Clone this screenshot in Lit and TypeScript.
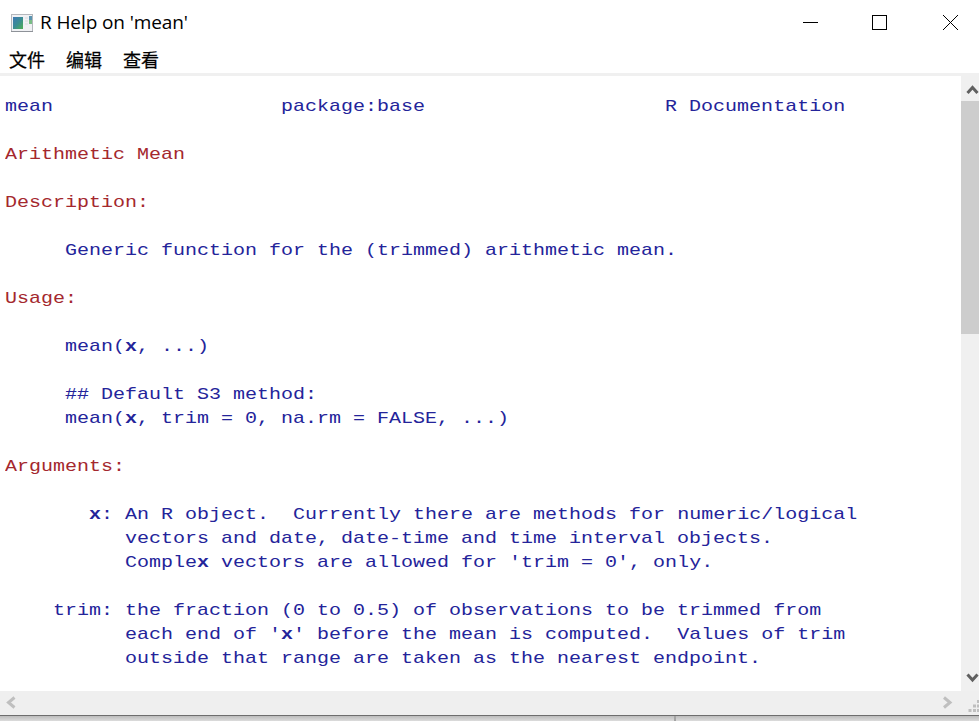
import { LitElement, html, css, svg } from "lit";
import { customElement } from "lit/decorators.js";

type Line = { text: string; heading?: boolean };

const h = (text: string): Line => ({ text, heading: true });
const t = (text: string): Line => ({ text });

const LINES: Line[] = [
  t("mean                   package:base                    R Documentation"),
  t(""),
  h("Arithmetic Mean"),
  t(""),
  h("Description:"),
  t(""),
  t("     Generic function for the (trimmed) arithmetic mean."),
  t(""),
  h("Usage:"),
  t(""),
  t("     mean(x, ...)"),
  t(""),
  t("     ## Default S3 method:"),
  t("     mean(x, trim = 0, na.rm = FALSE, ...)"),
  t(""),
  h("Arguments:"),
  t(""),
  t("       x: An R object.  Currently there are methods for numeric/logical"),
  t("          vectors and date, date-time and time interval objects."),
  t("          Complex vectors are allowed for 'trim = 0', only."),
  t(""),
  t("    trim: the fraction (0 to 0.5) of observations to be trimmed from"),
  t("          each end of 'x' before the mean is computed.  Values of trim"),
  t("          outside that range are taken as the nearest endpoint."),
];

@customElement("help-text")
export class HelpText extends LitElement {
  static styles = css`
    :host { display: block; padding: 18px 0 0 5px; box-sizing: border-box; overflow: hidden; }
    .line {
      height: 24px;
      font: 20px/24px "Liberation Mono", monospace;
      white-space: pre;
      color: #24249a;
      transform: scaleY(0.86);
      transform-origin: 0 18px;
    }
    .heading { color: #a4282e; }
    b { font-weight: 700; }
  `;
  render() {
    return LINES.map(
      (l) => html`<div class="line ${l.heading ? "heading" : ""}">${l.text
        .split(/(x)/)
        .map((p) => (p === "x" ? html`<b>x</b>` : p))}</div>`
    );
  }
}

@customElement("app-root")
export class AppRoot extends LitElement {
  static styles = css`
    :host {
      display: flex;
      flex-direction: column;
      width: 979px;
      height: 721px;
      overflow: hidden;
      background: #fff;
      color: #000;
    }
    svg { display: block; }
    .title { display: flex; align-items: center; height: 45px; flex: none; padding-left: 11px; }
    .name {
      margin-left: 7px;
      flex: 1;
      font: 19px/45px "Open Sans", "Noto Sans", sans-serif;
      letter-spacing: -0.1px;
      white-space: nowrap;
    }
    .menu {
      display: flex;
      gap: 21px;
      height: 28px;
      flex: none;
      padding-left: 9px;
      font: 18px/28px "Noto Sans CJK SC", sans-serif;
      -webkit-text-stroke: 0.25px #000;
      border-bottom: 3px solid #f0f0f0;
    }
    .menu span { width: 36px; white-space: nowrap; }
    .body { display: flex; height: 615px; flex: none; }
    help-text { flex: 1; height: 615px; }
    .vbar { width: 18px; height: 615px; background: #f0f0f0; display: flex; flex-direction: column; }
    .up { height: 25px; }
    .thumb { height: 233px; background: #cdcdcd; }
    .down { margin-top: auto; height: 25px; }
    .hbar { display: flex; justify-content: space-between; height: 24px; flex: none; background: #efefef; }
    .edge { height: 1px; flex: none; background: #6e6e6e; }
    .below { height: 5px; flex: none; background: linear-gradient(#bcbcbc, #dcdcdc); display: flex; }
    .notch { margin-left: 674px; width: 2px; background: #a4a4a4; }
  `;

  render() {
    return html`
      <div class="title">
        <svg width="22" height="18" viewBox="0 0 22 18">
          <defs>
            <linearGradient id="g" x1="0" y1="0" x2="1" y2="1">
              <stop offset="0" stop-color="#3f78b4" />
              <stop offset=".5" stop-color="#3a8c94" />
              <stop offset="1" stop-color="#4fb052" />
            </linearGradient>
          </defs>
          <rect x=".5" y=".5" width="21" height="17" fill="#f0f1f4" stroke="#b4b7bc" />
          <path d="M0 17.5h22" stroke="#8e9298" />
          <rect x="2" y="3" width="10" height="12" fill="url(#g)" />
          <path d="M14 4h3M14 7h3M14 10h3" stroke="#d8dbe0" />
          <rect x="18" y="2" width="3" height="4" fill="#5a94b0" />
          <rect x="18" y="6" width="3" height="4" fill="#79bd86" />
        </svg>
        <div class="name">R Help on 'mean'</div>
        <svg width="176" height="45" viewBox="803 0 176 45" fill="none" stroke="#000" shape-rendering="crispEdges">
          <path d="M803 22.5h15" />
          <rect x="872.5" y="15.5" width="14" height="14" />
          <path d="M943 15l15 15M958 15l-15 15" shape-rendering="auto" />
        </svg>
      </div>
      <div class="menu"><span>文件</span><span>编辑</span><span>查看</span></div>
      <div class="body">
        <help-text></help-text>
        <div class="vbar">
          <svg class="up" width="18" height="25"><path d="M6.5 17l5-5.5 5 5.5" fill="none" stroke="#606060" stroke-width="3" /></svg>
          <div class="thumb"></div>
          <svg class="down" width="18" height="25"><path d="M6.5 8.5l5 5.5 5-5.5" fill="none" stroke="#606060" stroke-width="3" /></svg>
        </div>
      </div>
      <div class="hbar">
        <svg width="24" height="24"><path d="M14.5 6.5l-6 5 6 5" fill="none" stroke="#bfbfbf" stroke-width="3" /></svg>
        <svg width="44" height="24" viewBox="935 691 44 24">
          <path d="M944 697.5l6 5-6 5" fill="none" stroke="#bfbfbf" stroke-width="3" />
          ${[[977, 700], [973, 704.5], [977, 704.5], [968.5, 709], [973, 709], [977, 709]].map(
            ([x, y]) => svg`<rect x=${x} y=${y} width="3" height="3" fill="#bfbfbf" />`
          )}
        </svg>
      </div>
      <div class="edge"></div>
      <div class="below"><div class="notch"></div></div>
    `;
  }
}
